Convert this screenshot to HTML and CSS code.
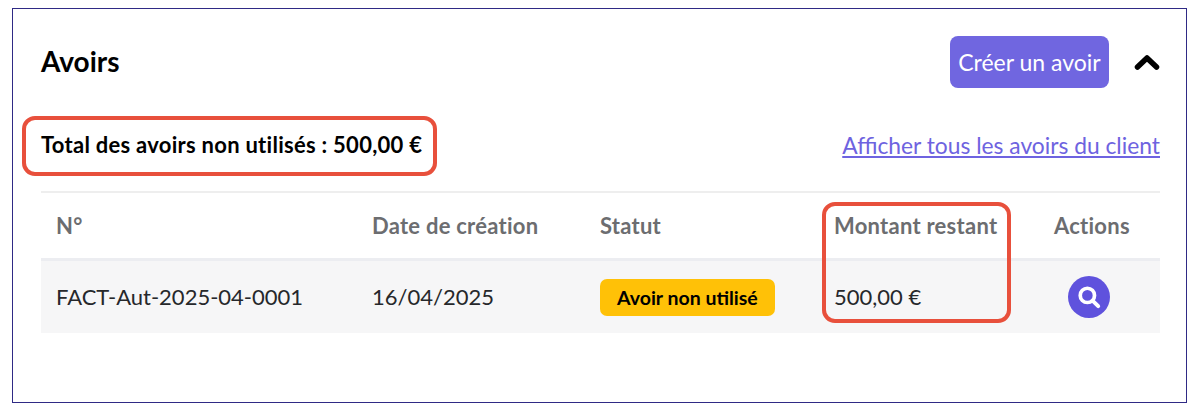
FILE: index.html
```html
<!DOCTYPE html>
<html lang="fr">
<head>
  <meta charset="UTF-8">
  <meta name="viewport" content="width=device-width, initial-scale=1.0">
  <title>Avoirs</title>
  <link rel="stylesheet" href="styles.css">
</head>
<body>

  <div class="card">
    <div class="card-header">
      <h2>Avoirs</h2>
      <div class="header-actions">
        <button class="btn-create">Créer un avoir</button>
        <svg class="chevron" width="26" height="18" viewBox="0 0 26 18">
          <path d="M3.5 14 L13 5 L22.5 14" fill="none" stroke="#000" stroke-width="5.5" stroke-linecap="round" stroke-linejoin="round"/>
        </svg>
      </div>
    </div>

    <div class="summary">
      <div class="total">Total des avoirs non utilisés : 500,00 €</div>
      <a href="#" class="show-all">Afficher tous les avoirs du client</a>
    </div>

    <table class="credits">
      <thead>
        <tr>
          <th class="col-number">N°</th>
          <th class="col-date">Date de création</th>
          <th class="col-status">Statut</th>
          <th class="col-amount">Montant restant</th>
          <th class="col-actions">Actions</th>
        </tr>
      </thead>
      <tbody>
        <tr>
          <td>FACT-Aut-2025-04-0001</td>
          <td>16/04/2025</td>
          <td><span class="badge">Avoir non utilisé</span></td>
          <td>500,00 €</td>
          <td>
            <a href="#" class="btn-view">
              <svg width="26" height="26" viewBox="0 0 24 24">
                <circle cx="10.5" cy="10.5" r="6.6" fill="none" stroke="#fff" stroke-width="3.4"/>
                <path d="M15.5 15.5 L20.5 20.5" stroke="#fff" stroke-width="3.6" stroke-linecap="round"/>
              </svg>
            </a>
          </td>
        </tr>
      </tbody>
    </table>

    <!-- red annotations drawn over the screenshot -->
    <div class="highlight highlight-total"></div>
    <div class="highlight highlight-amount"></div>
  </div>

</body>
</html>
```

FILE: styles.css
```css
body {
  margin: 0;
  background: #fff;
  font-family: Lato, "Open Sans", sans-serif;
  color: #000;
}

.card {
  position: relative;
  box-sizing: border-box;
  width: 1175px;
  height: 395px;
  margin: 8px 0 0 12px;
  padding: 26px 26px 0 28px;
  border: 1px solid #2f2a85;
}

.card-header {
  display: flex;
  justify-content: space-between;
  align-items: center;
  height: 54px;
}

.card-header h2 {
  margin: 0 0 2px;
  font-size: 28px;
  font-weight: 700;
}

.header-actions {
  display: flex;
  align-items: center;
  gap: 25px;
}

.btn-create {
  width: 159px;
  height: 52px;
  padding: 0;
  border: none;
  border-radius: 8px;
  background-color: #7066e0;
  color: #fff;
  font-family: inherit;
  font-size: 23px;
}

.chevron {
  display: block;
}

.summary {
  display: flex;
  justify-content: space-between;
  align-items: center;
  height: 104px;
  padding-top: 9px;
  box-sizing: border-box;
  border-bottom: 2px solid #eeeeee;
}

.total {
  font-size: 22px;
  font-weight: 700;
  letter-spacing: 0.27px;
}

.show-all {
  color: #6e63e0;
  font-size: 22.8px;
}

.credits {
  width: 100%;
  table-layout: fixed;
  border-collapse: collapse;
}

.credits th {
  height: 66px;
  padding: 0 0 0 15px;
  box-sizing: border-box;
  border-bottom: 3px solid #ecedf1;
  text-align: left;
  color: #6c6d70;
  font-size: 22px;
  font-weight: 700;
  letter-spacing: 0.25px;
}

.credits td {
  height: 72px;
  padding: 0 0 0 15px;
  background-color: #f6f6f7;
  color: #26282b;
  font-size: 22px;
}

.col-number { width: 316px; }
.col-date { width: 228px; }
.col-status { width: 234px; }
.col-amount { width: 220px; }

.badge {
  display: inline-block;
  margin-top: 1px;
  padding: 0 17px;
  line-height: 37px;
  border-radius: 7px;
  background-color: #ffc107;
  color: #000;
  font-size: 19.5px;
  font-weight: 700;
}

.btn-view {
  display: flex;
  justify-content: center;
  align-items: center;
  width: 42px;
  height: 42px;
  margin-left: 14px;
  border-radius: 50%;
  background-color: #5f52dd;
}

.highlight {
  position: absolute;
  box-sizing: border-box;
  border: 4px solid #e8503c;
  border-radius: 13px;
}

.highlight-total {
  left: 9px;
  top: 107px;
  width: 415px;
  height: 60px;
}

.highlight-amount {
  left: 809px;
  top: 193px;
  width: 189px;
  height: 121px;
}
```
